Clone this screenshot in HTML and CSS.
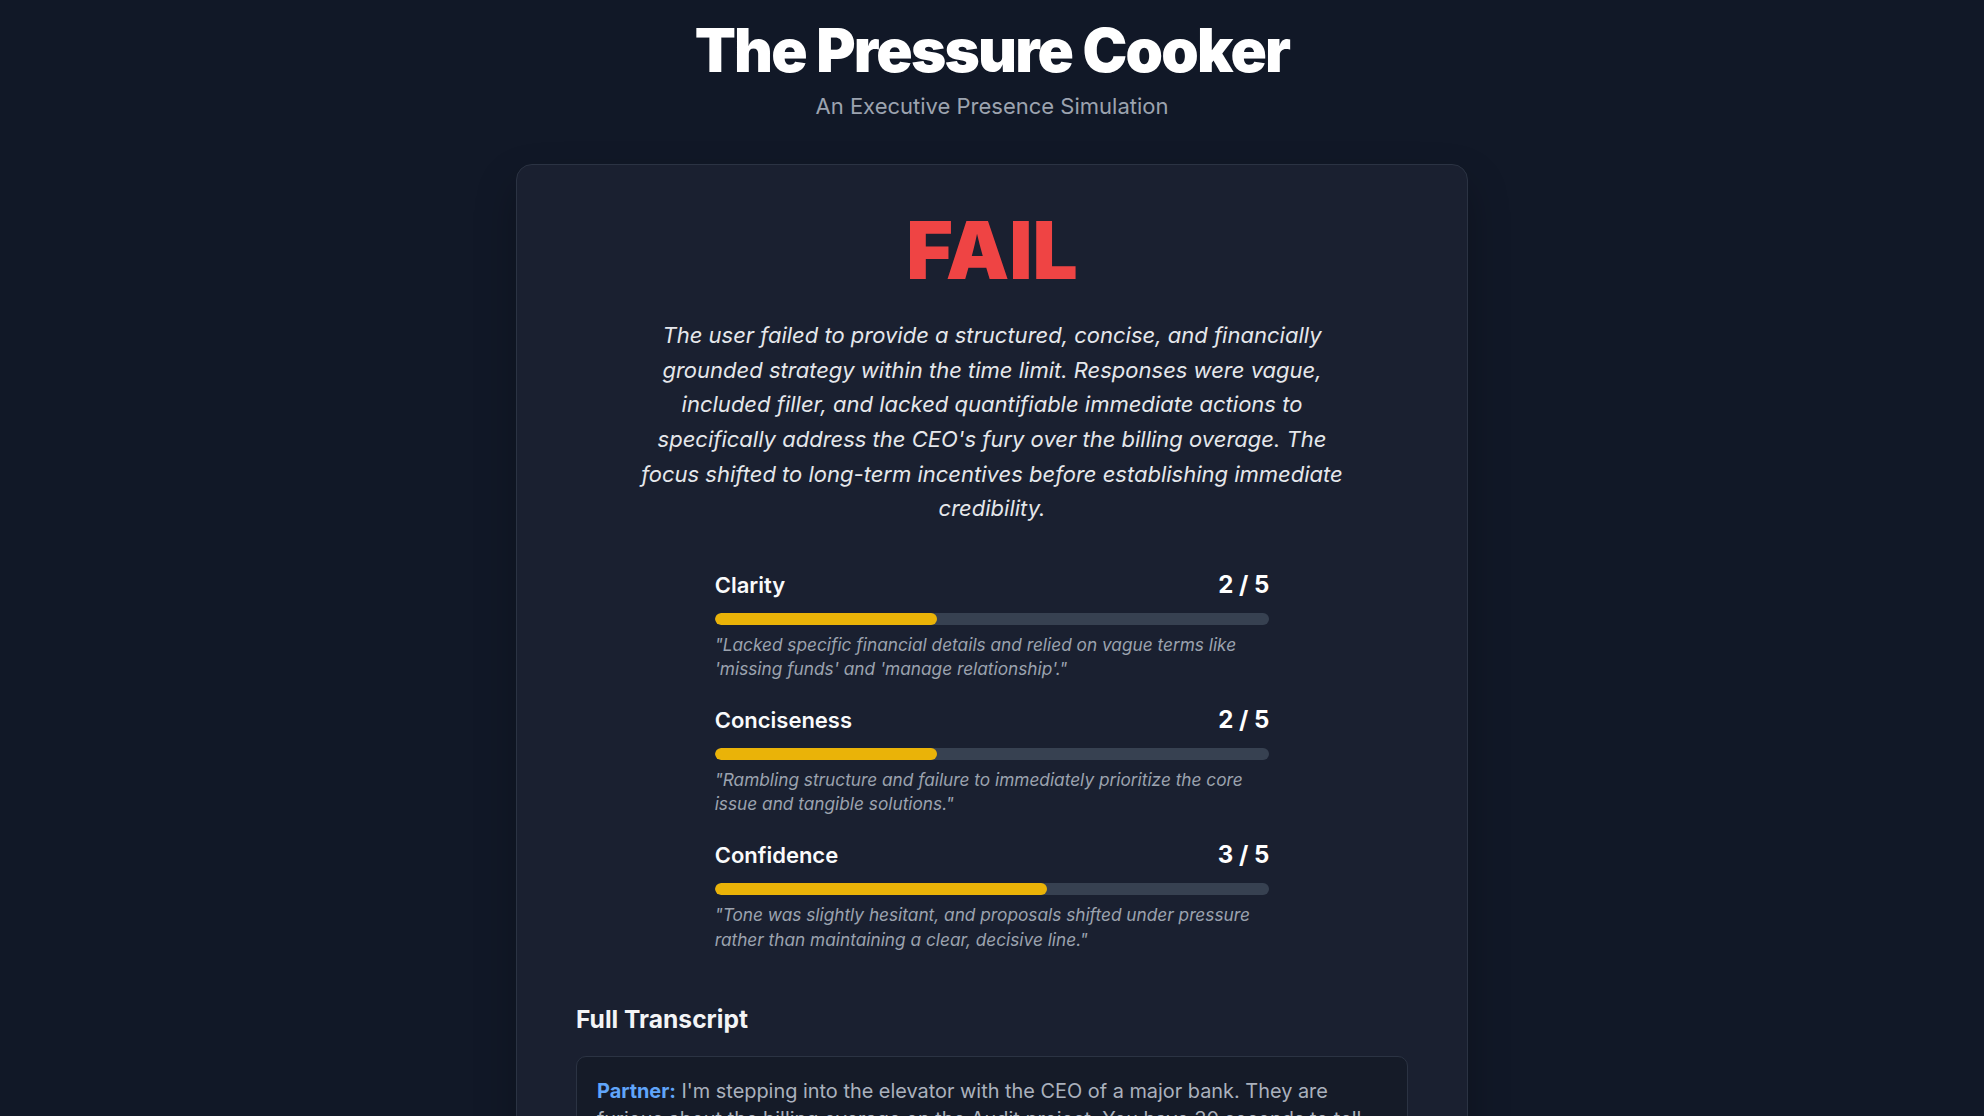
FILE: index.html
```html
<!DOCTYPE html>
<html lang="en">
<head>
    <meta charset="UTF-8">
    <meta name="viewport" content="width=device-width, initial-scale=1.0">
    <title>The Pressure Cooker</title>
    <link rel="stylesheet" href="styles.css">
</head>
<body>
    <main class="page">
        <header class="page-header">
            <h1>The Pressure Cooker</h1>
            <p class="subtitle">An Executive Presence Simulation</p>
        </header>

        <section class="result-card">
            <h2 class="verdict">FAIL</h2>
            <p class="summary">The user failed to provide a structured, concise, and financially grounded strategy within the time limit. Responses were vague, included filler, and lacked quantifiable immediate actions to specifically address the CEO's fury over the billing overage. The focus shifted to long-term incentives before establishing immediate credibility.</p>

            <div class="scores">
                <div class="score">
                    <div class="score-head">
                        <span class="score-label">Clarity</span>
                        <span class="score-value">2 / 5</span>
                    </div>
                    <div class="bar"><div class="bar-fill" style="width: 40%"></div></div>
                    <p class="score-note">"Lacked specific financial details and relied on vague terms like 'missing funds' and 'manage relationship'."</p>
                </div>
                <div class="score">
                    <div class="score-head">
                        <span class="score-label">Conciseness</span>
                        <span class="score-value">2 / 5</span>
                    </div>
                    <div class="bar"><div class="bar-fill" style="width: 40%"></div></div>
                    <p class="score-note">"Rambling structure and failure to immediately prioritize the core issue and tangible solutions."</p>
                </div>
                <div class="score">
                    <div class="score-head">
                        <span class="score-label">Confidence</span>
                        <span class="score-value">3 / 5</span>
                    </div>
                    <div class="bar"><div class="bar-fill" style="width: 60%"></div></div>
                    <p class="score-note">"Tone was slightly hesitant, and proposals shifted under pressure rather than maintaining a clear, decisive line."</p>
                </div>
            </div>

            <h3 class="transcript-title">Full Transcript</h3>
            <div class="transcript">
                <p><span class="speaker partner">Partner:</span> I'm stepping into the elevator with the CEO of a major bank. They are furious about the billing overage on the Audit project. You have 30 seconds to tell them how we fix it. Go.</p>
                <p><span class="speaker user">You:</span> Um, so, I think first we need to look at where the missing funds went and then manage the relationship going forward.</p>
                <p><span class="speaker partner">Partner:</span> The CEO just asked: "What exactly are you going to do about it today?"</p>
            </div>
        </section>
    </main>
</body>
</html>
```

FILE: styles.css
```css
body {
    margin: 0;
    background-color: #111827;
    color: #f3f4f6;
    font-family: Inter, "Noto Sans", sans-serif;
}

.page {
    display: flex;
    flex-direction: column;
    align-items: center;
    padding: 20px 0 60px;
}

.page-header {
    text-align: center;
}

.page-header h1 {
    margin: 0;
    font-size: 60px;
    line-height: 60px;
    font-weight: 900;
    letter-spacing: -0.029em;
    color: #ffffff;
}

.subtitle {
    margin: 12px 0 0;
    font-size: 22px;
    line-height: 28px;
    color: #9ca3af;
}

.result-card {
    box-sizing: border-box;
    width: 952px;
    margin-top: 44px;
    padding: 45px 59px 48px;
    background-color: #1a2030;
    border: 1px solid #2b3343;
    border-radius: 16px;
    box-shadow: 0 20px 40px rgba(0, 0, 0, 0.25);
}

.verdict {
    margin: 0;
    text-align: center;
    font-size: 80px;
    line-height: 80px;
    font-weight: 900;
    color: #ef4444;
}

.summary {
    max-width: 728px;
    margin: 28px auto 0;
    text-align: center;
    font-size: 22px;
    line-height: 34.67px;
    font-style: italic;
    color: #e5e7eb;
}

.scores {
    width: 66.6667%;
    margin: 43px auto 0;
    display: flex;
    flex-direction: column;
    gap: 22.5px;
}

.score-head {
    display: flex;
    justify-content: space-between;
    align-items: center;
    height: 32px;
}

.score-label {
    font-size: 22px;
    line-height: 30px;
    font-weight: 600;
    color: #f9fafb;
}

.score-value {
    font-size: 24px;
    line-height: 32px;
    font-weight: 700;
    color: #ffffff;
}

.bar {
    margin-top: 12px;
    height: 12px;
    border-radius: 6px;
    background-color: #374151;
    overflow: hidden;
}

.bar-fill {
    height: 100%;
    border-radius: 6px;
    background-color: #eab308;
}

.score-note {
    margin: 8px 0 0;
    font-size: 17.25px;
    line-height: 24.3px;
    font-style: italic;
    color: #9ca3af;
}

.transcript-title {
    margin: 51px 0 0;
    font-size: 24.6px;
    line-height: 32px;
    font-weight: 700;
    color: #f3f4f6;
}

.transcript {
    margin-top: 21px;
    padding: 20px;
    background-color: #151b28;
    border: 1px solid #2b3343;
    border-radius: 10px;
}

.transcript p {
    margin: 0 0 16px;
    font-size: 19.9px;
    line-height: 28px;
    color: #aab1bd;
}

.transcript p:last-child {
    margin-bottom: 0;
}

.speaker {
    font-weight: 700;
}

.partner {
    color: #60a5fa;
}

.user {
    color: #34d399;
}
```
